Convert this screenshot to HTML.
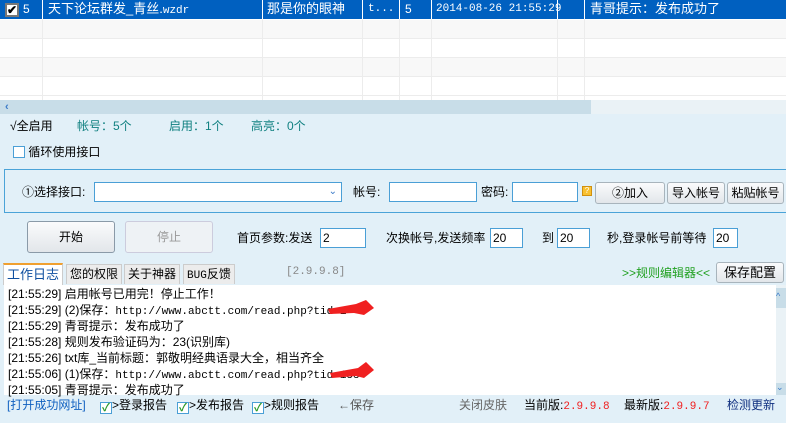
<!DOCTYPE html>
<html><head><meta charset="utf-8"><style>
*{margin:0;padding:0;box-sizing:border-box}
body{width:786px;height:423px;overflow:hidden;background:#e2f0f8;font-family:"Liberation Sans","Noto Sans CJK SC","WenQuanYi Zen Hei",sans-serif;font-size:12px;line-height:16px;color:#000;position:relative}
.a{position:absolute;white-space:nowrap;line-height:16px}
.row{position:absolute;left:0;width:786px;height:19px}
.vl{position:absolute;top:19px;width:1px;height:81px;background:#ececec}
.inp{position:absolute;background:#fff;border:1px solid #4a9fd6;height:20px;font-size:12px;padding-left:2px;line-height:18px}
.btn{position:absolute;border:1px solid #a8b4bc;border-radius:3px;background:linear-gradient(#fafbfc,#e2e6ea);text-align:center;font-size:12px}
.mono{font-family:"Liberation Mono","Noto Sans CJK SC",monospace}
.tab{position:absolute;top:264px;height:20px;background:#ececec;border:1px solid #ccc;border-bottom:none;font-size:12px;line-height:19px;padding:0 3px}
.log div{height:16px;line-height:16px;font-size:12px}
.cb{display:inline-block;width:12px;height:12px;border:1px solid #4a9fd6;background:#fff;vertical-align:-2px;color:#2a9a2a;font-size:11px;line-height:10px;text-align:center;font-weight:bold}
</style></head><body>
<div style="position:absolute;left:0;top:0;width:786px;height:100px;background:#fff"></div>
<div class="row" style="top:0;background:#0060c0;height:19px"></div>
<div class="row" style="top:20px;background:#f8f8f8;height:18px"></div>
<div class="row" style="top:57px;background:#f8f8f8;height:19px"></div>
<div class="a" style="left:0;top:38px;width:786px;height:1px;background:#ececec"></div>
<div class="a" style="left:0;top:57px;width:786px;height:1px;background:#ececec"></div>
<div class="a" style="left:0;top:76px;width:786px;height:1px;background:#ececec"></div>
<div class="a" style="left:0;top:95px;width:786px;height:1px;background:#ececec"></div>
<div class="vl" style="left:42px"></div><div class="vl" style="left:262px"></div><div class="vl" style="left:362px"></div><div class="vl" style="left:399px"></div><div class="vl" style="left:431px"></div><div class="vl" style="left:557px"></div><div class="vl" style="left:584px"></div>
<div class="a" style="left:42px;top:0;width:1px;height:19px;background:#fff"></div>
<div class="a" style="left:262px;top:0;width:1px;height:19px;background:#fff"></div>
<div class="a" style="left:362px;top:0;width:1px;height:19px;background:#fff"></div>
<div class="a" style="left:399px;top:0;width:1px;height:19px;background:#fff"></div>
<div class="a" style="left:431px;top:0;width:1px;height:19px;background:#fff"></div>
<div class="a" style="left:557px;top:0;width:1px;height:19px;background:#fff"></div>
<div class="a" style="left:584px;top:0;width:1px;height:19px;background:#fff"></div>
<div class="a" style="left:5px;top:3px;width:14px;height:14px;background:#fff;border:2px solid #777;font-size:12px;line-height:10px;font-weight:bold;text-align:center">✔</div>
<div class="a" style="color:#fff;left:23px;top:1px;font-size:12px">5</div>
<div class="a" style="color:#fff;left:48px;top:1px;font-size:13px">天下论坛群发_青丝.<span class="mono" style="font-size:11px">wzdr</span></div>
<div class="a" style="color:#fff;left:267px;top:1px;font-size:13px">那是你的眼神</div>
<div class="a mono" style="color:#fff;left:368px;top:1px;font-size:11px">t...</div>
<div class="a" style="color:#fff;left:405px;top:1px">5</div>
<div class="a mono" style="color:#fff;left:436px;top:1px;font-size:11px">2014-08-26 21:55:29</div>
<div class="a" style="color:#fff;left:590px;top:1px;font-size:13px">青哥提示：发布成功了</div>
<div class="a" style="left:0;top:100px;width:786px;height:14px;background:#eaf2f6"></div>
<div class="a" style="left:0;top:100px;width:591px;height:14px;background:#c8dde8"></div>
<div class="a" style="left:5px;top:99px;color:#3a7ac8;font-size:11px;font-weight:bold">‹</div>
<div class="a" style="left:10px;top:118px;font-size:12px">√全启用</div>
<div class="a" style="left:77px;top:118px;color:#108080">帐号：5个</div>
<div class="a" style="left:169px;top:118px;color:#108080">启用：1个</div>
<div class="a" style="left:251px;top:118px;color:#108080">高亮：0个</div>
<div class="a" style="left:13px;top:144px"><span class="cb" style="width:12px;height:12px"></span> <span style="font-size:12px">循环使用接口</span></div>
<div class="a" style="left:4px;top:169px;width:790px;height:44px;border:1px solid #4aa3d8;border-right:none"></div>
<div class="a" style="left:22px;top:184px">①选择接口:</div>
<div class="inp" style="left:94px;top:182px;width:248px"><span style="position:absolute;right:4px;top:0;color:#3a7ac8;font-size:10px">⌄</span></div>
<div class="a" style="left:353px;top:184px">帐号:</div>
<div class="inp" style="left:389px;top:182px;width:88px"></div>
<div class="a" style="left:481px;top:184px">密码:</div>
<div class="inp" style="left:512px;top:182px;width:66px"></div>
<div class="a" style="left:582px;top:186px;width:10px;height:10px;background:#f8c030;border:1px solid #d09010;font-size:8px;line-height:8px;text-align:center;color:#fff">?</div>
<div class="btn" style="left:595px;top:182px;width:70px;height:22px;line-height:20px">②加入</div>
<div class="btn" style="left:667px;top:182px;width:58px;height:22px;line-height:20px">导入帐号</div>
<div class="btn" style="left:727px;top:182px;width:57px;height:22px;line-height:20px">粘贴帐号</div>
<div class="btn" style="left:27px;top:221px;width:88px;height:32px;line-height:30px;border-color:#8a9aa8">开始</div>
<div class="btn" style="left:125px;top:221px;width:88px;height:32px;line-height:30px;color:#999;border-color:#ccd;background:#eef2f5">停止</div>
<div class="a" style="left:237px;top:230px">首页参数:发送</div>
<div class="inp" style="left:320px;top:228px;width:46px">2</div>
<div class="a" style="left:386px;top:230px">次换帐号,发送频率</div>
<div class="inp" style="left:490px;top:228px;width:33px">20</div>
<div class="a" style="left:542px;top:230px">到</div>
<div class="inp" style="left:557px;top:228px;width:33px">20</div>
<div class="a" style="left:607px;top:230px">秒,登录帐号前等待</div>
<div class="inp" style="left:713px;top:228px;width:25px">20</div>
<div class="tab" style="left:3px;top:263px;height:22px;background:#fff;border-top:2px solid #f0a030;color:#1050a0;font-size:13px;line-height:19px">工作日志</div>
<div class="tab" style="left:66px">您的权限</div>
<div class="tab" style="left:124px">关于神器</div>
<div class="tab" style="left:183px"><span class="mono" style="font-size:11px">BUG</span>反馈</div>
<div class="a mono" style="left:286px;top:264px;color:#888;font-size:11px">[2.9.9.8]</div>
<div class="a" style="left:622px;top:265px;color:#20a020">&gt;&gt;规则编辑器&lt;&lt;</div>
<div class="btn" style="left:716px;top:262px;width:68px;height:21px;line-height:19px;font-size:13px">保存配置</div>
<div class="a" style="left:4px;top:285px;width:782px;height:110px;background:#fff"></div>
<div class="a" style="left:776px;top:285px;width:10px;height:110px;background:#eaf2f6"></div>
<div class="a" style="left:776px;top:288px;width:10px;height:20px;background:#c8dde8;color:#3a7ac8;font-size:9px">^</div>
<div class="a" style="left:776px;top:383px;width:10px;height:12px;background:#c8dde8;color:#3a7ac8;font-size:9px;line-height:8px">⌄</div>
<div class="a log" style="left:8px;top:286px">
<div>[21:55:29] 启用帐号已用完！停止工作！</div>
<div>[21:55:29] (2)保存：<span class="mono" style="font-size:11px">http://www.abctt.com/read.php?tid=1</span></div>
<div>[21:55:29] 青哥提示：发布成功了</div>
<div>[21:55:28] 规则发布验证码为：23(识别库)</div>
<div>[21:55:26] txt库_当前标题：郭敬明经典语录大全，相当齐全</div>
<div>[21:55:06] (1)保存：<span class="mono" style="font-size:11px">http://www.abctt.com/read.php?tid=155</span></div>
<div>[21:55:05] 青哥提示：发布成功了</div>
</div>
<svg class="a" style="left:326px;top:300px" width="50" height="80"><path d="M2 9 L30 4 L40 0 L48 8 L38 15 L28 13 L4 14Z" fill="#f02020"/><path d="M4 73 L32 68 L40 62 L48 70 L38 78 L30 76 L6 78Z" fill="#f02020"/></svg>
<div class="a" style="left:7px;top:397px;color:#1060c0">[打开成功网址]</div>
<div class="a" style="left:100px;top:397px"><span class="cb">✓</span>&gt;登录报告</div>
<div class="a" style="left:177px;top:397px"><span class="cb">✓</span>&gt;发布报告</div>
<div class="a" style="left:252px;top:397px"><span class="cb">✓</span>&gt;规则报告</div>
<div class="a" style="left:338px;top:397px;color:#555">←保存</div>
<div class="a" style="left:459px;top:397px;color:#666">关闭皮肤</div>
<div class="a" style="left:524px;top:397px">当前版:<span class="mono" style="color:#f02020;font-size:11px">2.9.9.8</span></div>
<div class="a" style="left:624px;top:397px">最新版:<span class="mono" style="color:#f02020;font-size:11px">2.9.9.7</span></div>
<div class="a" style="left:727px;top:397px;color:#103080">检测更新</div>
</body></html>
